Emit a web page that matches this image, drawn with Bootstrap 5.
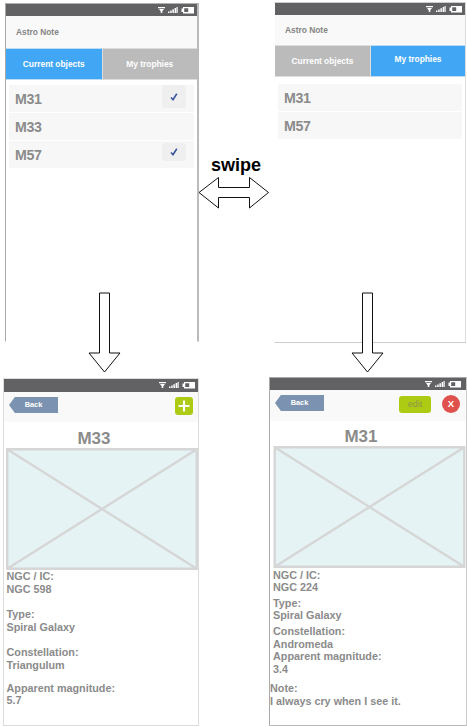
<!DOCTYPE html>
<html lang="en">
<head>
<meta charset="utf-8">
<meta name="viewport" content="width=device-width, initial-scale=1">
<title>Astro Note wireframe</title>
<link href="https://cdn.jsdelivr.net/npm/bootstrap@5.3.0/dist/css/bootstrap.min.css" rel="stylesheet">
<style>
body{background:#fff;font-family:"Liberation Sans",Arial,sans-serif;font-weight:700;color:#8b8b8b;line-height:1}
.board{width:467px;height:727px}
/* phones and arrows are nodes on a free canvas */
.phone,.arrows,.swipe-label{position:absolute}
.phone{background:#fff;border:1px solid #dcdcdc}
.phone-list{left:5px;top:3px;width:194px;height:339px;border-color:#b0b0b0 #bbb transparent #aaa;border-right-width:2px}
.phone-trophies{left:274px;top:2px;width:192px;height:341px;border-color:#ccc #ddd #ccc transparent}
.phone-m33{left:3px;top:378px;width:196px;height:348px}
.phone-m31{left:269px;top:377px;width:198px;height:349px;border-color:#aaa #ccc #bbb #aaa}
.status{height:12px;background:#626264}
.phone-m33 .status{height:13px}
.phone-m31 .status{padding-right:2px}
.status svg{display:block}
.title-bar{height:32px;background:#f9f9f9;font-size:8.4px;padding-left:10px;color:#858585}
.phone-trophies .title-bar{height:30px}
.tab-cell{height:32px;width:50%;background:#bbb;color:#fff;font-size:8.4px;border-top:1px solid #ddd;border-bottom:1px solid #ddd}
.tab-cell.on{background:#41a7f5;border-color:#bcdcf5}
.tab-cell+.tab-cell{border-left:1px solid #ddd}
.phone-trophies .on{padding-bottom:3px}
.objects{padding:5px 3px 0 3px;gap:1px}
.phone-trophies .objects{padding-top:7px}
.object{height:27px;background:#f7f7f7;padding:2px 8px 0 6px;font-size:14.2px;letter-spacing:-.3px}
.tick{width:24px;height:23px;background:#efefef;border-radius:3px;margin-top:-2px}
.tick.low{height:18px;margin-top:0}
.actions{background:#f9f9f9;height:30px;padding:5px 5px 0 5px}
.phone-m31 .actions{height:31px;padding-right:6px}
.back{width:49px;height:16px;background:#7b93b0;color:#fff;font-size:7.4px;clip-path:polygon(0 50%,12% 0,100% 0,100% 100%,12% 100%)}
.add{width:18px;height:18px;border-radius:3px;background:#aecb14}
.edit{width:32px;height:17px;border-radius:3px;background:#aecb14;color:#8d9649;font-size:9px;margin:1px 11px 0 0;font-weight:400}
.close-dot{width:18px;height:18px;border-radius:50%;background:#df514d;color:#fff;font-size:9.5px}
.name{height:26px;font-size:17px;padding-top:8px;margin-right:14px}
.phone-m31 .name{height:25px;padding-top:7px;margin-right:14px}
.photo{display:block;margin-left:2px}
.phone-m31 .photo{margin-left:3px}
.facts{font-size:10.8px;line-height:12.6px;padding-left:2.500px}
.phone-m31 .facts{padding:.6px 0 0 3px}
.facts p,.note p{margin:0}
.facts .gap-a{padding-top:13px}
.facts .gap-b{padding-top:10px}
.facts .gap-c{padding-top:3px}
.note{font-size:10.8px;line-height:12.6px;padding-top:6.600px}
.swipe-label{left:211px;top:155px;font-size:18px;color:#000;line-height:20px}
.arrows{left:0;top:0;fill:#fff;stroke:#111;stroke-width:1}
</style>
<script src="https://cdn.jsdelivr.net/npm/bootstrap@5.3.0/dist/js/bootstrap.bundle.min.js"></script>
</head>
<body>
<svg width="0" height="0" class="position-absolute">
 <symbol id="sys" viewBox="0 0 39 12"><g fill="#fff"><path d="M0 3h7v1.200H0zM1 5h5L4.300 7.200V9H2.700V7.200z"/><path d="M10 7.500h1.500V9H10zM12.200 6.500h1.500V9h-1.500zM14.400 5.300h1.500V9h-1.500zM16.600 4h1.500v5h-1.500zM18.500 3h1.200v6h-1.200z"/><path fill-rule="evenodd" d="M25 3h11v6.500H25V8h-1.500V4.500H25zM26.200 4.300v3.700h4V4.300z"/></g></symbol>
 <symbol id="tick" viewBox="0 0 8 8"><path d="M1 4.500l2 2.200L6.800.8" fill="none" stroke="#39569c" stroke-width="1.600"/></symbol>
 <symbol id="photo" viewBox="0 0 192 122"><path fill="#e5f3f4" stroke="#d6d6d6" stroke-width="2.400" d="M1.200 1.200h189.600v119.600H1.200zM1.200 1.200l189.600 119.600M190.800 1.200L1.200 120.800"/></symbol>
</svg>
<main class="board position-relative overflow-hidden">
 <section class="phone phone-list">
  <div class="status d-flex justify-content-end"><svg width="39" height="12"><use href="#sys"/></svg></div>
  <div class="title-bar d-flex align-items-center">Astro Note</div>
  <div class="d-flex"><div class="tab-cell on d-flex align-items-center justify-content-center">Current objects</div><div class="tab-cell d-flex align-items-center justify-content-center">My trophies</div></div>
  <div class="objects d-flex flex-column">
   <div class="object d-flex justify-content-between align-items-center"><span>M31</span><span class="tick d-flex align-items-center justify-content-center align-self-start"><svg width="8" height="8"><use href="#tick"/></svg></span></div>
   <div class="object d-flex align-items-center">M33</div>
   <div class="object d-flex justify-content-between align-items-center"><span>M57</span><span class="tick low d-flex align-items-center justify-content-center align-self-start"><svg width="8" height="8"><use href="#tick"/></svg></span></div>
  </div>
 </section>

 <section class="phone phone-trophies">
  <div class="status d-flex justify-content-end"><svg width="39" height="12"><use href="#sys"/></svg></div>
  <div class="title-bar d-flex align-items-center">Astro Note</div>
  <div class="d-flex"><div class="tab-cell d-flex align-items-center justify-content-center">Current objects</div><div class="tab-cell on d-flex align-items-center justify-content-center">My trophies</div></div>
  <div class="objects d-flex flex-column">
   <div class="object d-flex align-items-center">M31</div>
   <div class="object d-flex align-items-center">M57</div>
  </div>
 </section>

 <section class="phone phone-m33">
  <div class="status d-flex justify-content-end"><svg width="39" height="12"><use href="#sys"/></svg></div>
  <div class="actions d-flex justify-content-between align-items-start"><div class="back d-flex align-items-center justify-content-center">Back</div>
   <div class="add d-flex align-items-center justify-content-center"><svg width="12" height="12"><path d="M6 .5v11M.5 6h11" stroke="#fff" stroke-width="2.200"/></svg></div></div>
  <div class="name text-center">M33</div>
  <svg class="photo" width="192" height="122"><use href="#photo"/></svg>
  <div class="facts"><p>NGC / IC:<br>NGC 598</p><p class="gap-a">Type:<br>Spiral Galaxy</p><p class="gap-a">Constellation:<br>Triangulum</p><p class="gap-b">Apparent magnitude:<br>5.7</p></div>
 </section>

 <section class="phone phone-m31">
  <div class="status d-flex justify-content-end"><svg width="39" height="12"><use href="#sys"/></svg></div>
  <div class="actions d-flex align-items-start"><div class="back d-flex align-items-center justify-content-center">Back</div>
   <div class="edit d-flex align-items-center justify-content-center ms-auto">edit</div><div class="close-dot d-flex align-items-center justify-content-center">X</div></div>
  <div class="name text-center">M31</div>
  <svg class="photo" width="193" height="122"><use href="#photo"/></svg>
  <div class="facts"><p>NGC / IC:<br>NGC 224</p><p class="gap-c">Type:<br>Spiral Galaxy</p><p class="gap-c">Constellation:<br>Andromeda</p><p>Apparent magnitude:<br>3.4</p></div>
  <div class="note"><p>Note:<br>I always cry when I see it.</p></div>
 </section>

 <div class="swipe-label">swipe</div>
 <svg class="arrows" width="467" height="727"><path d="M199 192.500L218.500 177.500V187.500H249.500V177.500L268.500 192.500L249.500 208V197.500H218.500V208Z"/><path d="M99.500 293H109.500V353H120L104.500 372L89 353H99.500Z"/><path d="M362.500 293H372.500V353H383L367.500 372L352 353H362.500Z"/></svg>
</main>
</body>
</html>
